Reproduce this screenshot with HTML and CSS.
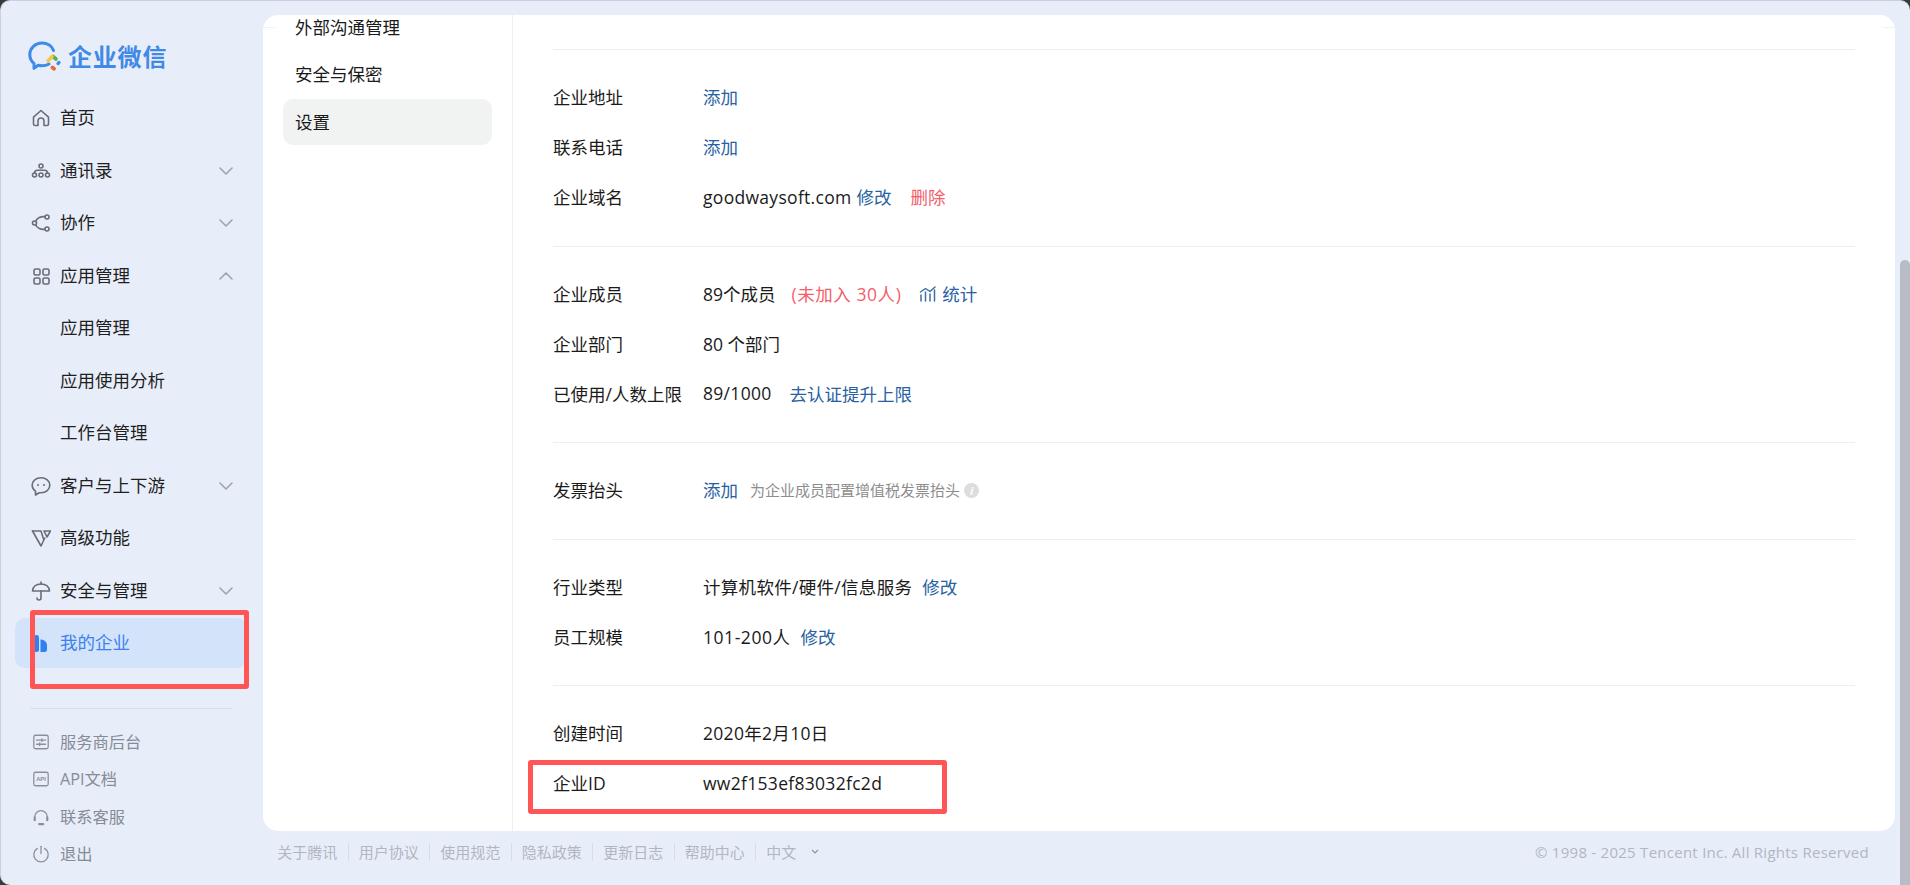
FILE: index.html
```html
<!DOCTYPE html>
<html lang="zh-CN">
<head>
<meta charset="utf-8">
<title>企业微信</title>
<link rel="stylesheet" href="styles.css">
</head>
<body>
<div class="window">
  <aside class="sidebar">
    <div class="logo">
      <svg class="logo-mark" viewBox="0 0 34 30" width="34" height="30" fill="none">
        <path d="M21 23C19 24.200 16.700 24.800 14 24.800c-1.400 0-2.600-.2-3.800-.5L6 27.400v-5C3.400 20.300 1.800 17.200 1.800 13.400 1.800 7 7.300 2 14 2c5.400 0 10 3 11.600 7.500" stroke="#3f8ce8" stroke-width="3" stroke-linecap="round" stroke-linejoin="round"/>
        <path d="M25 15.500l3 2.500" stroke="#5bb04f" stroke-width="3.600" stroke-linecap="round"/>
        <path d="M24 15.500l-4 4.500" stroke="#f6c744" stroke-width="3.400" stroke-linecap="round"/>
        <path d="M24.500 26.500l1.500 1.200" stroke="#ea6b3a" stroke-width="3.800" stroke-linecap="round"/>
        <path d="M31 21.500l-1 1" stroke="#3f8ce8" stroke-width="3.200" stroke-linecap="round"/>
      </svg>
      <span class="logo-text">企业微信</span>
    </div>
    <nav class="menu">
      <a class="item"><svg class="ico" viewBox="0 0 20 20"><path d="M2.500 9.200 10 2.500l7.500 6.700V16a1.500 1.500 0 0 1-1.500 1.500h-3V13a3 3 0 0 0-6 0v4.500H4A1.500 1.500 0 0 1 2.500 16z"/></svg><span>首页</span></a>
      <a class="item"><svg class="ico" viewBox="0 0 20 20"><circle cx="10" cy="5" r="2"/><circle cx="3.500" cy="14" r="2"/><circle cx="10" cy="14" r="2"/><circle cx="16.500" cy="14" r="2"/><path d="M3.500 12c0-2 1.500-2.800 3-2.800h7c1.500 0 3 .8 3 2.800"/></svg><span>通讯录</span><svg class="chev" viewBox="0 0 14 8"><path d="M1 1l6 6 6-6"/></svg></a>
      <a class="item"><svg class="ico" viewBox="0 0 20 20"><circle cx="16" cy="4" r="2"/><circle cx="16" cy="16" r="2"/><circle cx="3.500" cy="10" r="2"/><path d="M14 3.800C10 3 6 5 4.600 8.300M4.600 11.700C6 15 10 17 14 16.200"/></svg><span>协作</span><svg class="chev" viewBox="0 0 14 8"><path d="M1 1l6 6 6-6"/></svg></a>
      <a class="item"><svg class="ico" viewBox="0 0 20 20"><rect x="3" y="3" width="6" height="6" rx="1.500"/><rect x="12" y="3" width="6" height="6" rx="1.500"/><rect x="3" y="12" width="6" height="6" rx="1.500"/><rect x="12" y="12" width="6" height="6" rx="1.500"/></svg><span>应用管理</span><svg class="chev" viewBox="0 0 14 8"><path d="M1 7l6-6 6 6"/></svg></a>
      <a class="item sub"><span>应用管理</span></a>
      <a class="item sub"><span>应用使用分析</span></a>
      <a class="item sub"><span>工作台管理</span></a>
      <a class="item"><svg class="ico" viewBox="0 0 20 20"><path d="M10 1.800c5 0 8.800 3.300 8.800 7.500S15 16.800 10 16.800c-.6 0-1.200 0-1.800-.1L4.500 19v-3.800C2.400 13.800 1.200 11.700 1.200 9.300 1.200 5.100 5 1.800 10 1.800z"/><circle class="dot" cx="7" cy="9" r="1"/><circle class="dot" cx="13" cy="9" r="1"/></svg><span>客户与上下游</span><svg class="chev" viewBox="0 0 14 8"><path d="M1 1l6 6 6-6"/></svg></a>
      <a class="item"><svg class="ico" viewBox="0 0 20 20"><path d="M1.500 3H10l2.500 8"/><path d="M1.500 3l8.500 15 3.800-8"/><path d="M13 3h6.500l-3.500 6z"/></svg><span>高级功能</span></a>
      <a class="item"><svg class="ico" viewBox="0 0 20 20"><path d="M1.500 10C2 5.500 5.500 3 10 3s8 2.500 8.500 7z"/><path d="M10 1v2M10 10v7a2 2 0 0 1-4 0"/></svg><span>安全与管理</span><svg class="chev" viewBox="0 0 14 8"><path d="M1 1l6 6 6-6"/></svg></a>
      <a class="item active"><svg class="ico" viewBox="0 0 20 20"><rect class="solid" x="3" y="2" width="5" height="17" rx="2.500"/><path class="solid" d="M9.500 6.500c3.500 0 6.500 2.500 6.500 6v4a2.500 2.500 0 0 1-2.500 2.500h-4z"/></svg><span>我的企业</span></a>
    </nav>
    <div class="side-rule"></div>
    <nav class="menu-low">
      <a class="low"><svg class="ico-low" viewBox="0 0 20 20"><rect x="2" y="2.500" width="16" height="15" rx="2"/><path d="M5 8h10M5 12.500h10M11 6.500v3M8.500 11v3"/></svg><span>服务商后台</span></a>
      <a class="low"><svg class="ico-low" viewBox="0 0 20 20"><rect x="2" y="2.500" width="16" height="15" rx="2"/><text x="10" y="12.400" class="api">API</text></svg><span>API文档</span></a>
      <a class="low"><svg class="ico-low" viewBox="0 0 20 20"><path d="M3 12V10a7 7 0 0 1 14 0v2"/><path class="thick" d="M3 10.500v3M17 10.500v3"/><path class="thick" d="M8 18h4.500"/></svg><span>联系客服</span></a>
      <a class="low"><svg class="ico-low" viewBox="0 0 20 20"><path d="M6 3.800a8 8 0 1 0 8 0"/><path d="M10 1.500v8"/></svg><span>退出</span></a>
    </nav>
  </aside>

  <div class="main">
    <div class="card">
      <nav class="subnav">
        <a class="subitem">外部沟通管理</a>
        <a class="subitem">安全与保密</a>
        <a class="subitem current">设置</a>
      </nav>
      <section class="content">
        <div class="group">
          <div class="row"><span class="label">企业地址</span><a class="link">添加</a></div>
          <div class="row"><span class="label">联系电话</span><a class="link">添加</a></div>
          <div class="row"><span class="label">企业域名</span><span class="lat">goodwaysoft.com</span><a class="link m5">修改</a><a class="danger m19">删除</a></div>
        </div>
        <div class="group">
          <div class="row"><span class="label">企业成员</span><span>89个成员</span><span class="danger wide m16">(未加入 30人)</span><svg class="stat" viewBox="0 0 18 16" width="18" height="16"><path d="M2 15V9M6.500 15V6M11 15V8M15.500 15V4M1.500 6 6.500 2.500l4.500 3 5-4.500"/></svg><a class="link m5">统计</a></div>
          <div class="row"><span class="label">企业部门</span><span>80 个部门</span></div>
          <div class="row"><span class="label">已使用/人数上限</span><span class="lat">89/1000</span><a class="link m18">去认证提升上限</a></div>
        </div>
        <div class="group">
          <div class="row"><span class="label">发票抬头</span><a class="link">添加</a><span class="hint">为企业成员配置增值税发票抬头</span><span class="info">i</span></div>
        </div>
        <div class="group">
          <div class="row"><span class="label">行业类型</span><span class="lat">计算机软件/硬件/信息服务</span><a class="link m10">修改</a></div>
          <div class="row"><span class="label">员工规模</span><span class="wide">101-200人</span><a class="link m10">修改</a></div>
        </div>
        <div class="group">
          <div class="row"><span class="label">创建时间</span><span class="lat">2020年2月10日</span></div>
          <div class="row"><span class="label">企业ID</span><span class="lat">ww2f153ef83032fc2d</span></div>
        </div>
      </section>
    </div>
    <footer class="footer">
      <div class="foot-links">
        <a>关于腾讯</a><a>用户协议</a><a>使用规范</a><a>隐私政策</a><a>更新日志</a><a>帮助中心</a><a class="lang">中文<svg class="foot-chev" viewBox="0 0 8 5" width="8" height="5"><path d="M1 1l3 3 3-3"/></svg></a>
      </div>
      <span class="copy">© 1998 - 2025 Tencent Inc. All Rights Reserved</span>
    </footer>
  </div>

  <div class="gutter"><div class="thumb"></div></div>

  <div class="mark mark-side"></div>
  <div class="mark mark-id"></div>
</div>
</body>
</html>
```

FILE: styles.css
```css
* { box-sizing: border-box; }
html, body { margin: 0; height: 100%; overflow: hidden; }
body {
  background: #3a3a3c;
  font-family: "Open Sans", "Noto Sans CJK SC", sans-serif;
  font-size: 17.5px;
  color: #1a1a1a;
}
.window {
  position: relative;
  display: flex;
  height: 885px;
  background: #e8eef9;
  border-radius: 10px 10px 0 10px;
  border-top: 1px solid #c9d0de;
  border-left: 1px solid #c9d0de;
  overflow: hidden;
}

/* sidebar */
.sidebar { width: 262px; flex: none; }
.logo { height: 90.75px; display: flex; align-items: center; padding: 19px 0 0 27px; gap: 6px; }
.logo-mark { flex: none; }
.logo-text { font-size: 24px; font-weight: 700; color: #4089e6; letter-spacing: 0.8px; }
.menu { display: flex; flex-direction: column; padding-left: 14px; }
.item {
  display: flex; align-items: center;
  height: 52.5px; width: 232px;
  padding-left: 16px; gap: 9px;
  border-radius: 10px;
  color: #1f1f1f;
}
.item span { margin-bottom: 2.4px; }
.item.sub { padding-left: 45px; }
.item .chev { margin-left: auto; margin-right: 14px; }
.item.active { height: 50px; margin-top: 1.25px; background: #d3e3fa; color: #3b82ee; }
.ico { width: 20px; height: 20px; flex: none; fill: none; stroke: #686d77; stroke-width: 1.6; stroke-linejoin: round; stroke-linecap: round; }
.ico .dot { fill: #686d77; stroke: none; }
.ico .solid { fill: #2f80f0; stroke: none; }
.chev { width: 14px; height: 8px; flex: none; fill: none; stroke: #9fa4ae; stroke-width: 1.6; stroke-linecap: round; stroke-linejoin: round; }
.side-rule { height: 1px; width: 203px; margin: 40px 0 14px 29px; background: #d8dfec; }
.menu-low { display: flex; flex-direction: column; padding-left: 31px; }
.low { display: flex; align-items: center; height: 37.5px; gap: 10px; font-size: 16.25px; color: #868b96; }
.low span { margin-bottom: 2.4px; }
.ico-low { width: 18px; height: 18px; flex: none; fill: none; stroke: #8a8f9a; stroke-width: 1.4; stroke-linecap: round; stroke-linejoin: round; }
.ico-low .thick { stroke-width: 2.4; }
.ico-low .api { font-family: "Liberation Sans", sans-serif; font-size: 6.500px; font-weight: 700; fill: #8a8f9a; stroke: none; text-anchor: middle; }

/* main */
.main { flex: 1; min-width: 0; display: flex; flex-direction: column; padding-top: 14px; }
.card {
  position: relative;
  height: 816px; flex: none;
  display: flex;
  background: #fff;
  border-radius: 15px;
  overflow: hidden;
}
.card::before, .card::after { content: ""; position: absolute; top: 12px; width: 12px; height: 1px; background: #f1f2f4; }
.card::before { left: 0; }
.card::after { right: 0; }
.subnav { width: 250px; flex: none; border-right: 1px solid #eeeff1; padding: 0 20px; margin-top: -12px; display: flex; flex-direction: column; }
.subitem { display: flex; align-items: center; height: 47.5px; padding: 0 0 1px 12px; border-radius: 10px; flex: none; }
.subitem.current { background: #f1f3f3; height: 46px; margin-top: 0.5px; }
.content { flex: 1; min-width: 0; padding: 34px 40px 0; }
.group { padding: 22.75px 0; border-top: 1px solid #eeeff1; }
.row { display: flex; align-items: center; height: 50px; white-space: nowrap; }
.row > span, .row > a { margin-bottom: 2.5px; }
.label { width: 150px; flex: none; }
.lat { letter-spacing: 0.3px; }
.wide { letter-spacing: 0.55px; }
.link { color: #27619f; }
.danger { color: #f2616b; }
.m5 { margin-left: 5px; }
.m10 { margin-left: 10px; }
.m16 { margin-left: 16px; }
.m18 { margin-left: 18px; }
.m19 { margin-left: 19px; }
.stat { margin-left: 18px; fill: none; stroke: #3f6f9f; stroke-width: 1.5; stroke-linecap: round; stroke-linejoin: round; }
.hint { margin-left: 12px; font-size: 15px; color: #8d8d8d; }
.row > .info { width: 15px; height: 15px; margin: 0 0 0 4px; border-radius: 50%; background: #dddde0; color: #fff; font-size: 11px; font-weight: 700; font-style: italic; text-align: center; line-height: 15px; }

/* footer */
.footer { flex: 1; display: flex; justify-content: space-between; align-items: center; padding: 0 26px 13px 4px; font-size: 15px; color: #b1b6c1; }
.foot-links { display: flex; align-items: center; }
.foot-links a { padding: 0 10.25px 0 10.25px; border-right: 1px solid #d6dce8; line-height: 18px; display: flex; align-items: center; }
.foot-links a.lang { border-right: 0; gap: 15px; }
.foot-chev { fill: none; stroke: #8f95a1; stroke-width: 1.2; }
.copy { letter-spacing: 0.26px; }

/* scrollbar */
.gutter { width: 15px; flex: none; padding: 259px 0 0 5px; }
.thumb { height: 100%; background: #b9bcc7; border-radius: 5px 5px 0 0; }

/* red annotations */
.mark { position: absolute; border: 5px solid #ff5555; border-radius: 3px; pointer-events: none; }
.mark-side { left: 29px; top: 609px; width: 219px; height: 79px; }
.mark-id { left: 527px; top: 759px; width: 419px; height: 54px; }
```
